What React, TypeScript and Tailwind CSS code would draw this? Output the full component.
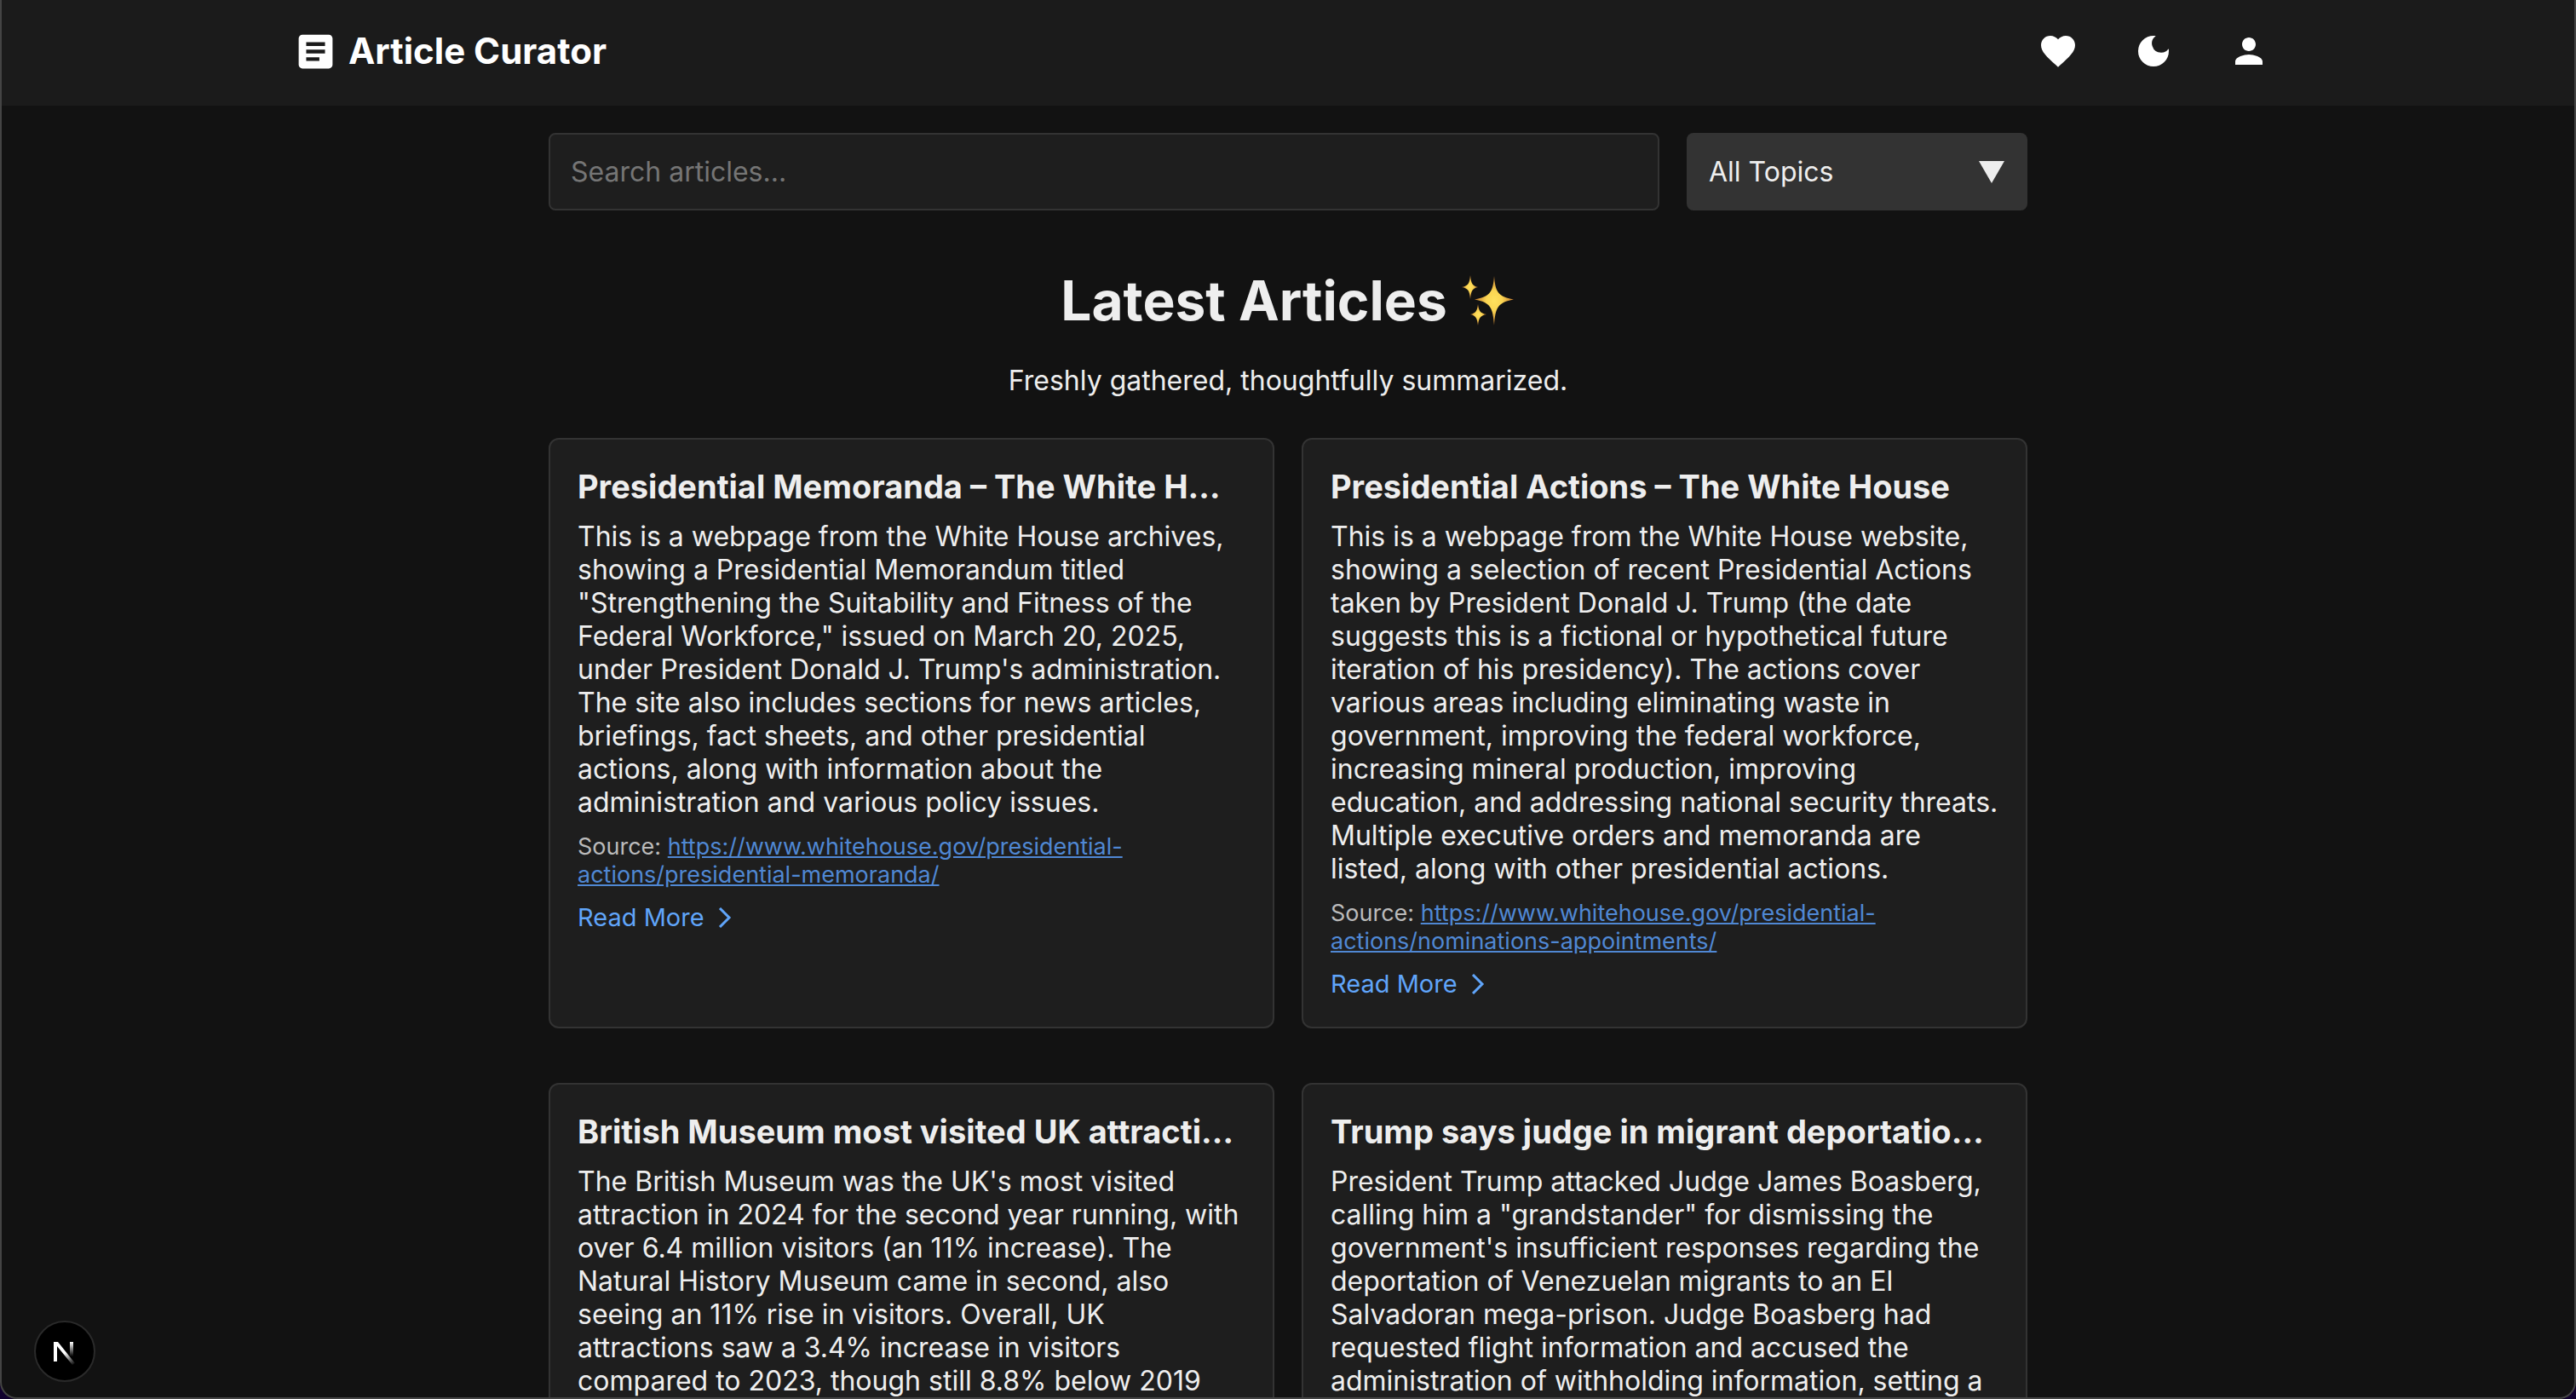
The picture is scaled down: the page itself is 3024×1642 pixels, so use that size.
import React from "react";
import { MdArticle, MdFavorite, MdDarkMode, MdPerson } from "react-icons/md";

type Article = { title: string; body: string; source: string };

const articles: Article[] = [
  {
    title: "Presidential Memoranda – The White H…",
    body: `This is a webpage from the White House archives, showing a Presidential Memorandum titled "Strengthening the Suitability and Fitness of the Federal Workforce," issued on March 20, 2025, under President Donald J. Trump's administration. The site also includes sections for news articles, briefings, fact sheets, and other presidential actions, along with information about the administration and various policy issues.`,
    source: "https://www.whitehouse.gov/presidential-actions/presidential-memoranda/",
  },
  {
    title: "Presidential Actions – The White House",
    body: `This is a webpage from the White House website, showing a selection of recent Presidential Actions taken by President Donald J. Trump (the date suggests this is a fictional or hypothetical future iteration of his presidency). The actions cover various areas including eliminating waste in government, improving the federal workforce, increasing mineral production, improving education, and addressing national security threats. Multiple executive orders and memoranda are listed, along with other presidential actions.`,
    source: "https://www.whitehouse.gov/presidential-actions/nominations-appointments/",
  },
  {
    title: "British Museum most visited UK attracti…",
    body: `The British Museum was the UK's most visited attraction in 2024 for the second year running, with over 6.4 million visitors (an 11% increase). The Natural History Museum came in second, also seeing an 11% rise in visitors. Overall, UK attractions saw a 3.4% increase in visitors compared to 2023, though still 8.8% below 2019`,
    source: "",
  },
  {
    title: "Trump says judge in migrant deportatio…",
    body: `President Trump attacked Judge James Boasberg, calling him a "grandstander" for dismissing the government's insufficient responses regarding the deportation of Venezuelan migrants to an El Salvadoran mega-prison. Judge Boasberg had requested flight information and accused the administration of withholding information, setting a`,
    source: "",
  },
];

function Sparkles() {
  return (
    <svg viewBox="0 0 64 64" className="size-16" role="img" aria-label="sparkles">
      <defs>
        <radialGradient id="spark">
          <stop offset="0" stopColor="#ffe15e" />
          <stop offset="0.4" stopColor="#fbd552" />
          <stop offset="1" stopColor="#c47a2c" />
        </radialGradient>
      </defs>
      <g fill="url(#spark)">
        <path d="M39 3C40.500 21 43 27 62 30.500C43 34 40.500 40 39 61C37.500 40 35 34 16 30.500C35 27 37.500 21 39 3Z" />
        <path d="M11 2C12 12 13.500 14.500 20 16C13.500 17.500 12 20 11 30C10 20 8.500 17.500 1 16C8.500 14.500 10 12 11 2Z" />
        <path d="M20 36C21 44 22.500 46.500 30 48C22.500 49.500 21 52 20 61C19 52 17.500 49.500 11 48C17.500 46.500 19 44 20 36Z" />
      </g>
    </svg>
  );
}

function Header() {
  return (
    <header className="bg-[#1b1b1b] text-white">
      <div className="mx-auto flex h-[124px] max-w-[2400px] items-center justify-between px-8 pb-1">
        <a href="#" className="flex items-center gap-3">
          <MdArticle className="size-[53px]" />
          <span className="text-[42px] leading-[52px] font-bold">Article Curator</span>
        </a>
        <nav className="flex gap-8">
          <button aria-label="Favorites" className="p-4">
            <MdFavorite className="size-12" />
          </button>
          <button aria-label="Toggle dark mode" className="p-4">
            <MdDarkMode className="size-12" />
          </button>
          <button aria-label="Account" className="p-4">
            <MdPerson className="size-12" />
          </button>
        </nav>
      </div>
    </header>
  );
}

function SearchBar() {
  return (
    <form className="flex gap-8">
      <input
        type="text"
        aria-label="Search articles"
        placeholder="Search articles..."
        className="h-[91px] min-w-0 flex-1 rounded-lg border-2 border-[#333] bg-[#1e1e1e] px-6 placeholder:text-[#757575]"
      />
      <div className="relative">
        <select
          aria-label="Topic"
          className="h-[91px] w-[400px] appearance-none rounded-lg bg-[#333] px-[26px] text-[#eee]"
        >
          <option>All Topics</option>
        </select>
        <svg
          viewBox="0 0 30 26"
          className="pointer-events-none absolute top-[33px] right-[27px] h-[26px] w-[30px] fill-[#eee]"
          aria-hidden="true"
        >
          <path d="M0 0H30L15 26Z" />
        </svg>
      </div>
    </form>
  );
}

function ArticleCard({ article }: { article: Article }) {
  return (
    <article className="min-w-0 rounded-xl border-2 border-[#333] bg-[#1e1e1e] p-8">
      <h2 className="truncate text-[38px] leading-[46px] font-bold">{article.title}</h2>
      <p className="mt-4 leading-[39px]">{article.body}</p>
      {article.source && (
        <p className="mt-4 text-[27px] leading-[33px] text-[#bbb]">
          Source:{" "}
          <a href={article.source} className="text-[#5088d4] underline">
            {article.source}
          </a>
        </p>
      )}
      <a href="#" className="mt-4 flex items-center gap-4 text-[29px] leading-[36px] text-[#60a5fa]">
        Read More
        <svg viewBox="0 0 16 24" className="h-6 w-4 fill-none stroke-current stroke-[3]" aria-hidden="true">
          <path d="M2 1L13 12L2 23" />
        </svg>
      </a>
    </article>
  );
}

function DevBadge() {
  return (
    <button
      aria-label="Open Next.js Dev Tools"
      className="fixed bottom-5 left-10 flex size-[72px] items-center justify-center rounded-full border-2 border-[#2a2a2a] bg-black"
    >
      <svg viewBox="1 -3 26 31" className="h-[31px] w-[26px]" fill="none" aria-hidden="true">
        <defs>
          <linearGradient id="diag" x1="14" y1="14" x2="25" y2="28" gradientUnits="userSpaceOnUse">
            <stop stopColor="#fff" />
            <stop offset="1" stopColor="#fff" stopOpacity="0" />
          </linearGradient>
          <linearGradient id="stem" x1="0" y1="1" x2="0" y2="18" gradientUnits="userSpaceOnUse">
            <stop stopColor="#fff" />
            <stop offset="1" stopColor="#fff" stopOpacity="0" />
          </linearGradient>
        </defs>
        <path d="M1 1H6L26 26L23 28L5 6V24H1Z" fill="url(#diag)" />
        <path d="M20 1H24V18H20Z" fill="url(#stem)" />
      </svg>
    </button>
  );
}

export default function App() {
  return (
    <div className="h-screen overflow-hidden bg-[#121212] font-['Inter',sans-serif] text-[32px] text-[#eee]">
      <Header />
      <main className="mx-auto max-w-[1800px] px-8 pt-8">
        <SearchBar />
        <h1 className="mt-16 flex items-center justify-center gap-4 text-[64px] leading-[84px] font-bold">
          Latest Articles
          <Sparkles />
        </h1>
        <p className="mt-8 text-center leading-[39px]">Freshly gathered, thoughtfully summarized.</p>
        <section className="mt-12 grid grid-cols-2 gap-x-8 gap-y-16">
          {articles.map((a) => (
            <ArticleCard key={a.title} article={a} />
          ))}
        </section>
      </main>
      <DevBadge />
      <div className="pointer-events-none fixed inset-0 overflow-hidden">
        <div className="h-full rounded-b-[20px] border-2 border-t-0 border-[#444] shadow-[0_0_0_20px_#12022f]" />
      </div>
    </div>
  );
}
